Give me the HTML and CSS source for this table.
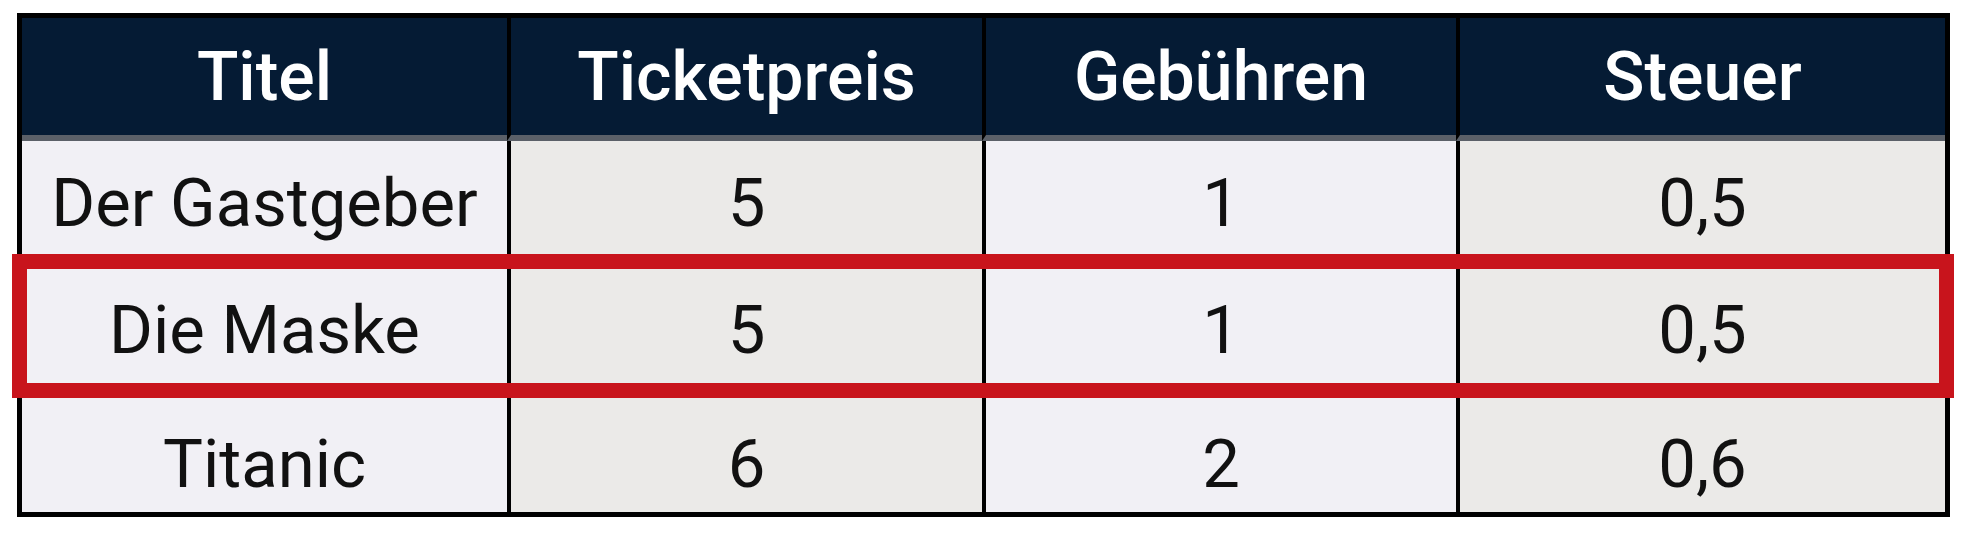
FILE: index.html
```html
<!DOCTYPE html>
<html lang="de">
<head>
<meta charset="utf-8">
<title>Tickets</title>
<link rel="stylesheet" href="styles.css">
</head>
<body>
<div class="wrap">
  <table class="grid">
    <colgroup>
      <col class="c1"><col class="c2"><col class="c3"><col class="c4">
    </colgroup>
    <thead>
      <tr>
        <th class="first">Titel</th>
        <th>Ticketpreis</th>
        <th>Gebühren</th>
        <th>Steuer</th>
      </tr>
    </thead>
    <tbody>
      <tr class="r1">
        <td class="first">Der Gastgeber</td>
        <td class="alt">5</td>
        <td>1</td>
        <td class="alt">0,5</td>
      </tr>
      <tr class="r2">
        <td class="first">Die Maske</td>
        <td class="alt">5</td>
        <td>1</td>
        <td class="alt">0,5</td>
      </tr>
      <tr class="r3">
        <td class="first">Titanic</td>
        <td class="alt">6</td>
        <td>2</td>
        <td class="alt">0,6</td>
      </tr>
    </tbody>
  </table>
  <div class="highlight"></div>
</div>
</body>
</html>
```

FILE: styles.css
```css
html, body {
  margin: 0;
  padding: 0;
  background: #ffffff;
}

body {
  width: 1968px;
  height: 544px;
  overflow: hidden;
  font-family: Roboto, "Liberation Sans", sans-serif;
}

.wrap {
  position: relative;
  padding: 13px 0 0 17px;
}

.grid {
  table-layout: fixed;
  border-collapse: separate;
  border-spacing: 0;
  width: 1933px;
  border: 5px solid #000;
  color: #111;
}

.c1 { width: 485px; }
.c2 { width: 475px; }
.c3 { width: 474px; }
.c4 { width: 489px; }

th, td {
  padding: 0;
  text-align: center;
  vertical-align: middle;
  border-left: 4px solid #000;
  white-space: nowrap;
}

th.first, td.first {
  border-left: none;
}

th {
  height: 117px;
  background: #051b34;
  color: #fff;
  font-weight: 500;
  font-size: 68px;
  border-bottom: 6px solid #5b6068;
}

td {
  background: #f1f0f5;
  font-size: 67px;
  font-weight: 400;
}

td.alt {
  background: #ebeae8;
}

.r1 td { height: 124px; }
.r2 td { height: 130px; }
.r3 td {
  height: 97px;
  padding-top: 20px;
}

.highlight {
  position: absolute;
  left: 12px;
  top: 254px;
  width: 1912px;
  height: 114px;
  border: 15px solid #c8141c;
  pointer-events: none;
}
```
